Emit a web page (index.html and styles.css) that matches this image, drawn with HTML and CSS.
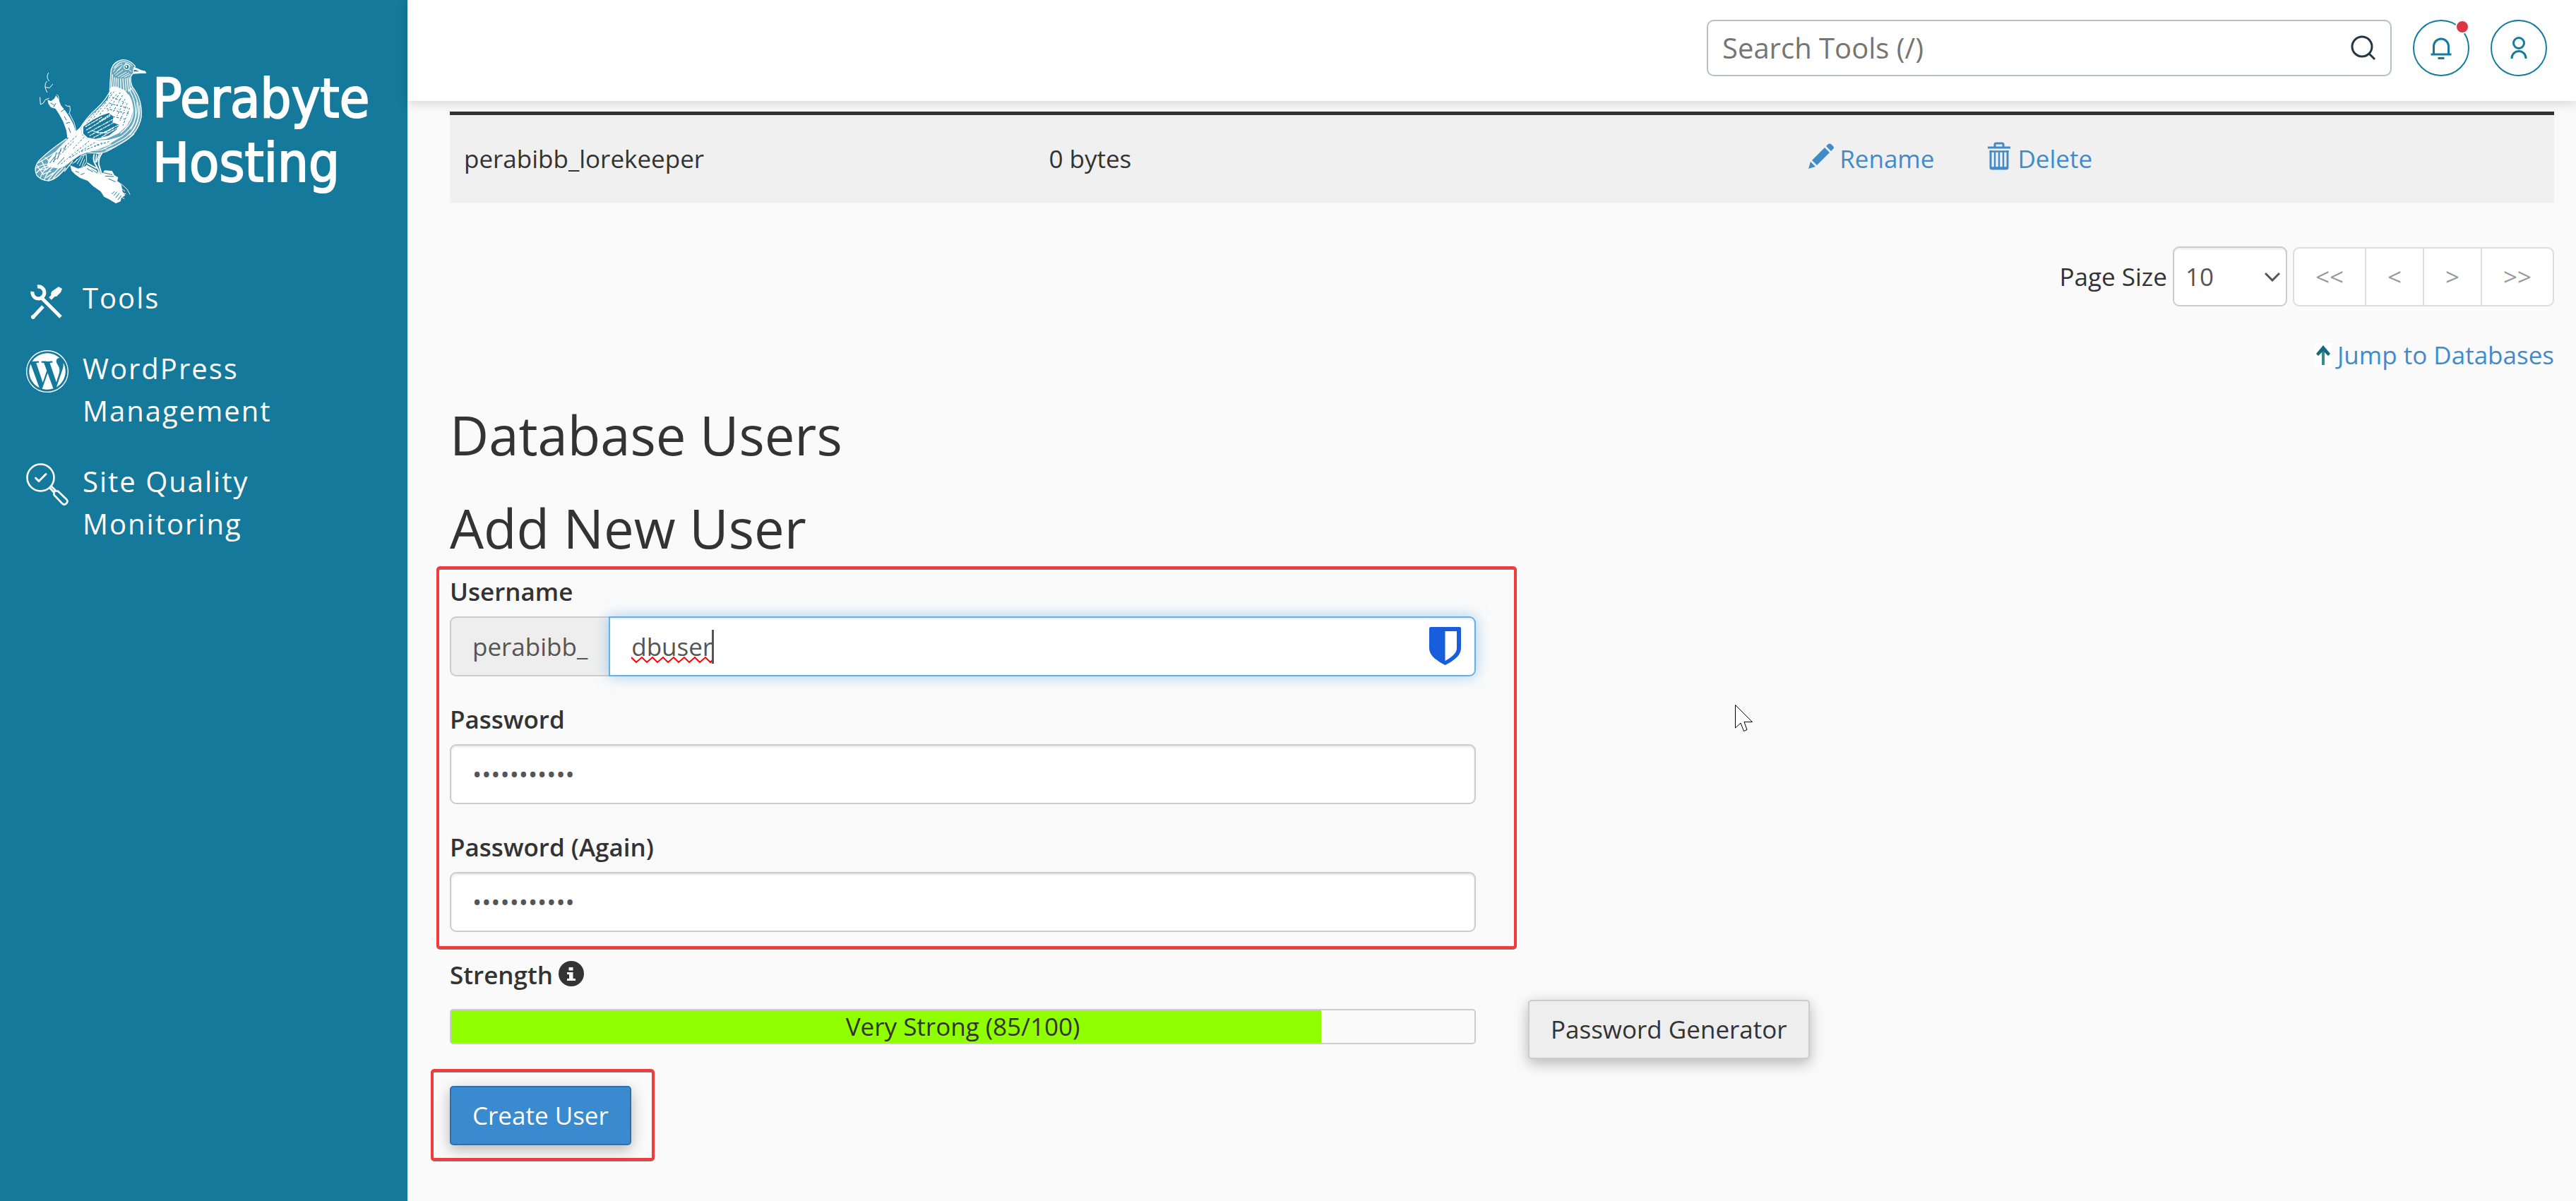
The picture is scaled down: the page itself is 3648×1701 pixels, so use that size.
FILE: index.html
```html
<!DOCTYPE html>
<html lang="en">
<head>
<meta charset="utf-8">
<title>Database Users</title>
<meta name="viewport" content="width=device-width, initial-scale=1">
<link rel="stylesheet" href="styles.css">
</head>
<body>
<div class="app">
  <aside class="sidebar">
    <a class="brand" href="#">
      <svg class="brand-bird" viewBox="0 0 510 648" fill="none" stroke="#fff" stroke-linecap="round" aria-hidden="true">
        <!-- branch -->
        <path fill="#fff" stroke="none" d="M70 190L84 196 98 186 106 172 118 190 126 212 146 238 164 264 180 294 190 326 184 350 154 352 150 320 136 282 118 250 104 228 84 222 74 208Z"/>
        <path stroke-width="3" d="M38 180L40 210 52 204 60 190 76 184M74 76Q62 92 76 110M66 112Q52 130 68 158M60 136L78 140 92 124M110 168Q122 178 116 196M146 212Q156 222 164 216 170 240 160 250M164 250L184 290 192 326"/>
        <path fill="#fff" stroke="none" d="M166 468L200 482 236 470 270 488 300 508 312 490 344 492 354 510 370 520 366 536 384 552 388 578 400 596 384 606 380 622 360 630 330 612 310 602 296 580 262 556 240 534 208 522 188 508 172 492Z"/>
        <path stroke-width="3" d="M356 530L386 550 408 570 420 592M388 570l10 8M390 586l12 4M384 604l12 6"/>
        <path stroke="#14799b" stroke-width="3" d="M84 204l12 8M104 206l-8 14M128 240l12-8M142 262l8 14M150 290l14-4M160 310l8 20M238 482l24 14M256 484l26 18M308 500l36 8M316 514l34 2M330 526l28 12M352 596l12-14M360 606l14-18M370 614l12-16M344 590l10-10M190 494l12 4M212 508l14-6"/>
        <!-- body and tail -->
        <path fill="#fff" fill-opacity=".35" stroke="none" d="M424 100Q426 130 446 164 474 220 468 270 456 326 404 362 350 396 300 418L240 420 200 430Q160 460 140 484 110 530 76 532 36 526 20 498 14 474 36 450 80 408 170 345 206 312 240 270 290 220 326 186 338 150 336 110 336 70 348 40 370 18 400 24 436 30 436 56Z"/>
        <path fill="#fff" stroke="none" d="M336 140Q346 130 366 136L400 150 424 186 434 230 424 270 406 302 372 332 320 356 260 364 232 352 216 336 212 310 232 280 262 250 300 216 326 186Z"/>
        <path fill="#fff" stroke="none" d="M210 306L216 340 240 356 280 362 330 360 380 346 330 380 290 400 236 414 206 426 172 450 140 474 118 482 92 478 68 474 74 444 100 414 126 386 158 354 184 330Z"/>
        <path fill="#14799b" stroke="none" d="M222 304L262 276 296 258 330 246 350 262 346 286 374 296 364 316 330 342 274 356 240 350 222 334Z"/>
        <path stroke-width="4" stroke-dasharray="6 5 12 6 3 5" d="M232 304L300 264M236 318L336 258M242 330L346 274M250 342L356 284M266 350L370 298M300 348L372 306M264 322q40 14 66 6M282 330q34 4 70-22M290 282L336 252"/>
        <path stroke="#14799b" stroke-width="3" stroke-dasharray="5 9 8 8 3 11" d="M340 160L236 290M352 156L262 272M362 168L292 252M378 160L322 244M388 172L346 246M398 188L364 262M408 206L376 284M418 226L390 300M346 180L400 202M336 206L414 226M322 228L418 250M350 262L406 274M224 350L180 396M246 366L128 462M270 372L160 440M300 374L210 412M192 344L108 424M330 368L270 388M180 368L90 456"/>
        <path stroke-width="4" d="M432 138Q474 190 468 264 456 326 404 362 360 390 320 410 300 416 280 418M424 140Q462 190 456 262 446 320 396 354 350 382 300 402M416 146Q448 196 444 260 436 308 386 344 344 370 290 392M414 168Q438 210 432 258 424 298 380 332M206 314Q240 260 280 226 318 190 334 156"/>
        <path stroke-width="3" d="M462 214Q466 290 420 340M450 200Q454 270 424 316M438 336Q390 380 318 404M240 412q30 8 60 4M250 404q40 6 70-8M270 396q34 0 70-18"/>
        <!-- tail feathers -->
        <path stroke-width="4" d="M150 356Q80 404 36 446 8 478 24 510 44 534 76 534 112 526 146 480M30 458q30-16 70-44M22 480q30-20 68-16M24 500q24-30 60-28M40 520q8-30 40-44M56 530q10-30 36-54M74 530q20-26 44-50M94 524q10-16 40-44M60 436q20 10 22 34M44 448l20 40M26 470l26 38M36 488l34-4M50 506l34-12M66 520l30-20M176 452l-34 42"/>
        <path stroke="#14799b" stroke-width="3" d="M108 414l-12 40M128 396l-16 46M100 432l-20 26M148 384l-8 20M140 436l-26 28"/>
        <path stroke-width="3" d="M186 456l28-28 20-6 2 30-16 26M196 462l18-30M206 470l18-42M216 474l12-30M176 462q14-10 20-20"/>
        <!-- legs -->
        <path stroke-width="6" d="M268 424Q262 446 272 462L284 484 302 530 322 552M300 418Q284 440 288 466L298 500 324 546M240 460L276 480M236 470l40 22"/>
        <path stroke-width="5" d="M278 424l-4 30M290 420l-12 34"/>
        <!-- neck and head -->
        <path stroke-width="4" d="M340 62Q336 110 334 150M340 64Q350 26 390 20 424 22 442 48L436 58 434 76 424 90Q420 116 432 140M346 84L340 156M354 96L350 150M362 98L360 146M370 100L370 144M380 100L382 146M390 100L394 150M400 100L404 150M408 98L414 154M416 94L422 150"/>
        <path stroke-width="3" d="M352 56Q362 32 392 28 416 28 430 46M350 70Q362 44 386 38M354 80L382 54M360 86L390 64M370 92L404 72M382 94L416 76M396 94L422 82M400 34q14 2 22 14M378 30l-22 24M390 44l-24 22M416 62l10 8"/>
        <circle cx="406" cy="50" r="11" fill="#14799b" stroke-width="4"/>
        <path fill="#fff" stroke="none" d="M400 44h8v10h-6zM436 50L452 56 468 64 486 68 490 78 466 78 430 80 438 70 460 70 446 64 434 62Z"/>
      </svg>
      <span class="brand-name">Perabyte<br>Hosting</span>
    </a>
    <nav class="menu">
      <a class="menu-item" href="#">
        <svg class="menu-icon" viewBox="0 0 60 60" aria-hidden="true">
          <g fill="none" stroke="#fff" stroke-linecap="butt">
            <path stroke-width="5" d="M20 24L49 53M10 53L24 38" />
            <path stroke-width="5" d="M16 10A8.500 8.500 0 1 1 9 17"/>
            <path stroke-width="5" d="M34 27L39 22"/>
          </g>
          <path fill="#fff" d="M36 17L46 10 51 13 49 18 43 24 38 24 35 21ZM7 54a3 3 0 1 1 5 1 3 3 0 0 1-5-1Z"/>
        </svg>
        <span>Tools</span>
      </a>
      <a class="menu-item" href="#">
        <svg class="menu-icon" viewBox="0 0 122.520 122.523" fill="#fff" aria-hidden="true">
          <path d="M8.708 61.260c0 20.802 12.089 38.779 29.619 47.298L13.258 39.872C10.342 46.408 8.708 53.641 8.708 61.260zM96.740 58.608c0-6.495-2.333-10.993-4.334-14.494-2.664-4.329-5.161-7.995-5.161-12.324 0-4.831 3.664-9.328 8.825-9.328.233 0 .454.029.681.042-9.350-8.566-21.807-13.796-35.489-13.796-18.360 0-34.513 9.420-43.910 23.688 1.233.037 2.395.063 3.382.063 5.497 0 14.006-.667 14.006-.667 2.833-.167 3.167 3.994.337 4.329 0 0-2.847.335-6.015.501L48.200 93.547l11.501-34.493-8.188-22.434c-2.830-.166-5.511-.501-5.511-.501-2.832-.166-2.500-4.496.332-4.329 0 0 8.679.667 13.843.667 5.496 0 14.006-.667 14.006-.667 2.835-.167 3.168 3.994.337 4.329 0 0-2.853.335-6.015.501l18.992 56.494 5.242-17.517C95.011 68.328 96.740 63.107 96.740 58.608zM62.184 65.857L46.416 111.676c4.708 1.384 9.687 2.141 14.846 2.141 6.120 0 11.989-1.058 17.452-2.979-.141-.225-.269-.464-.374-.724L62.184 65.857zM107.376 36.046c.226 1.674.354 3.471.354 5.404 0 5.333-.996 11.328-3.996 18.824l-16.053 46.413c15.624-9.111 26.133-26.038 26.133-45.426C113.813 52.124 111.480 43.532 107.376 36.046z"/>
          <path d="M61.262 0C27.483 0 0 27.481 0 61.260c0 33.783 27.483 61.263 61.262 61.263 33.778 0 61.265-27.480 61.265-61.263C122.526 27.481 95.040 0 61.262 0zM61.262 119.715c-32.230 0-58.453-26.223-58.453-58.455 0-32.230 26.222-58.451 58.453-58.451 32.229 0 58.450 26.221 58.450 58.451C119.712 93.492 93.491 119.715 61.262 119.715z"/>
        </svg>
        <span>WordPress Management</span>
      </a>
      <a class="menu-item" href="#">
        <svg class="menu-icon" viewBox="0 0 60 60" fill="none" stroke="#fff" stroke-width="2.600" stroke-linecap="round" stroke-linejoin="round" aria-hidden="true">
          <circle cx="20.500" cy="20.500" r="19"/>
          <path stroke-width="3" d="M13.500 21L18 25.500 28 15.500"/>
          <path d="M33.500 35L39 41M36 33L42 39M39.500 45V41Q40 39 42 39.500L45 39.500 57 51Q60 54 57 57 54 60 51 57Z"/>
        </svg>
        <span>Site Quality Monitoring</span>
      </a>
    </nav>
  </aside>

  <div class="page">
    <header class="topbar">
      <form class="search" role="search">
        <input class="search-input" type="search" placeholder="Search Tools (/)" aria-label="Search Tools">
        <button class="search-button" type="button" aria-label="Search">
          <svg viewBox="0 0 36 36" width="36" height="36" fill="none" stroke="#253746" stroke-width="3" aria-hidden="true"><circle cx="16" cy="16" r="14"/><path d="M26 26L34 34"/></svg>
        </button>
      </form>
      <button class="round-button" type="button" aria-label="Notifications">
        <svg viewBox="0 0 32 32" width="32" height="32" fill="none" stroke="#127c9e" stroke-width="3" aria-hidden="true"><path d="M1.500 25H30.500M5.500 25V13.500a10.500 10.500 0 0 1 21 0V25M11.500 30.500h9"/></svg>
        <span class="badge"></span>
      </button>
      <button class="round-button" type="button" aria-label="Account">
        <svg viewBox="0 0 32 32" width="32" height="32" fill="none" stroke="#127c9e" stroke-width="3" aria-hidden="true"><circle cx="16" cy="9" r="7.500"/><path d="M6 31V30.500a10 10 0 0 1 20 0V31"/></svg>
      </button>
    </header>

    <main class="content">
      <table class="databases">
        <colgroup><col class="col-name"><col class="col-size"><col></colgroup>
        <tbody>
          <tr>
            <td>perabibb_lorekeeper</td>
            <td>0 bytes</td>
            <td>
              <div class="actions">
                <a href="#"><svg class="action-icon" viewBox="0 0 36 36" fill="currentColor" aria-hidden="true"><path d="M0 36L3 26 10 33ZM5 24L23 6 30 13 12 31ZM25 4L28 1Q30 0 32 1L35 4Q37 6 35 8L32 11Z"/></svg>Rename</a>
                <a href="#"><svg class="action-icon" viewBox="0 0 36 40" fill="none" stroke="currentColor" aria-hidden="true"><path stroke-width="3" d="M2 8H34M12 7V3.500Q12 2 14 2H22Q24 2 24 3.500V7M6 12V36Q6 38 8 38H28Q30 38 30 36V12"/><path stroke-width="2.500" d="M4.500 13.500H31.500M12 13V37M18 13V37M24 13V37M7 36.500H29"/></svg>Delete</a>
              </div>
            </td>
          </tr>
        </tbody>
      </table>

      <div class="paging">
        <label for="page-size">Page Size</label>
        <div class="select-wrap">
          <select id="page-size" class="page-size"><option>10</option><option>20</option><option>50</option></select>
          <svg class="select-arrow" viewBox="0 0 22 14" fill="none" stroke="#555" stroke-width="3" aria-hidden="true"><path d="M1 2L11 12 21 2"/></svg>
        </div>
        <div class="pager">
          <button type="button">&lt;&lt;</button><button type="button">&lt;</button><button type="button">&gt;</button><button type="button">&gt;&gt;</button>
        </div>
      </div>

      <p class="jump">
        <a href="#"><svg viewBox="0 0 24 34" width="24" height="34" aria-hidden="true"><path fill="#fff" d="M0 0h24v34H0z"/><path fill="none" stroke="#3f8693" stroke-width="4" d="M12 8V31"/><path fill="#14697c" d="M12 3L22 15 19 18 12 11 5 18 2 15Z"/></svg>Jump to Databases</a>
      </p>

      <h2>Database Users</h2>
      <h2>Add New User</h2>

      <form class="user-form">
        <div class="credentials">
          <div class="field">
            <label for="username">Username</label>
            <div class="input-group">
              <span class="addon">perabibb_</span>
              <div class="input-focus">
                <input id="username" class="text-input is-focused" type="text" value="dbuser" spellcheck="false">
                <svg class="typing-marks" viewBox="0 0 118 48" width="118" height="48" fill="none" aria-hidden="true"><path stroke="#f00" stroke-width="2" d="M0 39L7 46 15 39 22 46 30 39 37 46 45 39 52 46 60 39 67 46 75 39 82 46 90 39 97 46 105 39 112 46 115 43"/><path stroke="#555" stroke-width="3" d="M115.500 0V48"/></svg>
                <svg class="shield" viewBox="0 0 45 54" width="45" height="54" aria-hidden="true"><path fill="#175ddc" fill-rule="evenodd" d="M2 0H43Q45 0 45 2V30Q45 36 40 42 33 49 22.500 54 12 49 5 42 0 36 0 30V2Q0 0 2 0ZM22.500 6V48Q39 39 39 30V6Z"/></svg>
              </div>
            </div>
          </div>
          <div class="field">
            <label for="password">Password</label>
            <input id="password" class="text-input" type="password" value="lorekeeper1">
          </div>
          <div class="field">
            <label for="password-again">Password (Again)</label>
            <input id="password-again" class="text-input" type="password" value="lorekeeper1">
          </div>
        </div>

        <div class="strength">
          <span class="strength-label">Strength
            <svg viewBox="0 0 36 36" width="36" height="36" aria-hidden="true"><circle cx="18" cy="18" r="18" fill="#333"/><path fill="#fafafa" d="M14.500 9h6v4.500h-6zM12 16h8.500v9H24v3H12v-3h3v-6h-3z"/></svg>
          </span>
          <div class="strength-row">
            <div class="meter">
              <div class="meter-fill" style="width: 85%"></div>
              <span class="meter-text">Very Strong (85/100)</span>
            </div>
            <div><button class="button" type="button">Password Generator</button></div>
          </div>
        </div>

        <div class="submit"><button class="button button-primary" type="submit">Create User</button></div>
      </form>

      <svg class="pointer" viewBox="0 0 26 38" width="26" height="38" fill="#fff" stroke="#000" stroke-width="1" aria-hidden="true"><path d="M.5.5V33L8 26 12.500 37.500 17 35.500 13 24.500H24.500Z"/></svg>
    </main>
  </div>
</div>
</body>
</html>
```

FILE: styles.css
```css
* { box-sizing: border-box; }

body {
  margin: 0;
  background: #fafafa;
  color: #333;
  font: 35px/50px "Open Sans", "Noto Sans", sans-serif;
}

a { color: #428bca; text-decoration: none; }
button, input, select { font: inherit; color: inherit; }

.app { display: flex; min-height: 100vh; }

/* Sidebar */
.sidebar {
  flex: 0 0 577px;
  padding: 78px 24px 40px 37px;
  background: #14799b;
}
.brand { display: flex; gap: 2px; padding-left: 7px; color: #fff; }
.brand-bird { flex: none; width: 170px; height: 216px; }
.brand-name {
  padding-top: 16px;
  font: 77px/91px "DejaVu Sans Condensed", "DejaVu Sans", sans-serif;
  -webkit-text-stroke: 2px #fff;
}
.menu { display: grid; gap: 40px; margin-top: 98px; }
.menu-item {
  display: flex;
  align-items: flex-start;
  gap: 20px;
  color: #fff;
  font-size: 40px;
  line-height: 60px;
  letter-spacing: 2px;
}
.menu-icon { flex: none; width: 60px; height: 60px; margin: 4px 0 -4px; }

/* Header */
.page { flex: 1; min-width: 0; }
.topbar {
  display: flex;
  justify-content: flex-end;
  gap: 30px;
  padding: 28px 41px 35px;
  background: #fff;
  box-shadow: 0 4px 14px rgba(0, 0, 0, .14);
}
.search {
  display: flex;
  align-items: center;
  flex: 0 1 970px;
  height: 80px;
  padding: 0 20px;
  border: 2px solid #b9bccd;
  border-radius: 10px;
}
.search-input {
  flex: 1;
  min-width: 0;
  padding: 0;
  border: 0;
  outline: 0;
  background: none;
  font-size: 40px;
}
.search-input::placeholder { color: #757575; opacity: 1; }
.search-button { display: flex; padding: 0; border: 0; background: none; }
.round-button {
  position: relative;
  display: flex;
  align-items: center;
  justify-content: center;
  width: 80px;
  height: 80px;
  padding: 0;
  border: 2px solid #127c9e;
  border-radius: 50%;
  background: #fff;
}
.badge {
  position: absolute;
  top: -2px;
  right: -2px;
  width: 20px;
  height: 20px;
  border: 2px solid #fff;
  border-radius: 50%;
  background: #dc3545;
}

/* Database list */
.content { position: relative; padding: 15px 31px 79px 60px; }
.databases {
  width: 100%;
  border-collapse: collapse;
  table-layout: fixed;
  border-top: 5px solid #333;
  background: #f0f0f0;
}
.databases td { padding: 37px 19px 37px 20px; }
.col-name { width: 27.800%; }
.col-size { width: 36.100%; }
.actions { display: flex; gap: 74px; }
.actions a { display: flex; gap: 8px; }
.action-icon { width: 36px; height: 40px; margin-top: 1px; }

.paging {
  display: flex;
  align-items: center;
  justify-content: flex-end;
  gap: 8px;
  margin-top: 62px;
}
.select-wrap { position: relative; }
.page-size {
  display: block;
  width: 162px;
  height: 85px;
  padding: 0 16px;
  border: 2px solid #ccc;
  border-radius: 9px;
  appearance: none;
  background: #fff;
  box-shadow: inset 0 2px 2px rgba(0, 0, 0, .08);
  color: #555;
}
.select-arrow {
  position: absolute;
  top: 36px;
  right: 10px;
  width: 22px;
  height: 14px;
  pointer-events: none;
}
.pager { display: flex; }
.pager button {
  height: 84px;
  margin-left: -2px;
  padding: 0 30px;
  border: 2px solid #ddd;
  background: #fff;
  color: #999;
}
.pager button:first-child { margin-left: 0; border-radius: 9px 0 0 9px; }
.pager button:last-child { border-radius: 0 9px 9px 0; }

.jump { display: flex; justify-content: flex-end; margin: 44px 0 0; }
.jump a { display: flex; align-items: center; gap: 8px; }

h2 {
  margin: 48px 0 0;
  font-size: 76px;
  font-weight: 400;
  line-height: 84px;
}
.jump + h2 { margin-top: 46px; }

/* New user form */
.user-form { margin-top: 23px; }
.credentials,
.submit { position: relative; }
.credentials {
  display: grid;
  gap: 36px;
  width: calc(50% - 37px);
}
.credentials::after,
.submit::after {
  content: "";
  position: absolute;
  border: 4px solid #f43b3b;
  border-radius: 5px;
  filter: drop-shadow(0 1px 0 #808080);
  pointer-events: none;
}
.credentials::after { inset: -11px -58px -24px -19px; }
.field { display: grid; gap: 10px; }
.field label,
.strength-label { font-weight: 600; }
.text-input {
  display: block;
  width: 100%;
  height: 85px;
  padding: 0 30px;
  border: 2px solid #ccc;
  border-radius: 9px;
  outline: 0;
  background: #fff;
  box-shadow: inset 0 2px 3px rgba(0, 0, 0, .1);
  color: #555;
}
.input-group { display: flex; }
.addon {
  display: flex;
  align-items: center;
  padding: 0 30px;
  border: 2px solid #ccc;
  border-right: 0;
  border-radius: 9px 0 0 9px;
  background: #eee;
  color: #555;
}
.input-focus { position: relative; flex: 1; }
.is-focused {
  border-color: #66afe9;
  border-radius: 0 9px 9px 0;
  box-shadow: inset 0 2px 3px rgba(0, 0, 0, .08), 0 0 20px rgba(102, 175, 233, .6);
}
.typing-marks { position: absolute; top: 19px; left: 32px; }
.shield { position: absolute; top: 15px; right: 21px; }

.strength { display: grid; gap: 10px; margin-top: 36px; }
.strength-label { display: flex; gap: 8px; }
.strength-label svg { margin-top: 5px; }
.strength-row {
  display: grid;
  grid-template-columns: 1fr 1fr;
  gap: 74px;
  align-items: start;
}
.meter {
  position: relative;
  height: 50px;
  margin-top: 13px;
  border: 2px solid #ccc;
  border-radius: 5px;
}
.meter-fill { height: 100%; background: #90ff00; }
.meter-text {
  position: absolute;
  inset: 0;
  line-height: 46px;
  text-align: center;
}
.button {
  display: block;
  height: 84px;
  padding: 0 30px;
  border: 2px solid #ccc;
  border-radius: 5px;
  background: #eee;
  box-shadow: 0 6px 20px rgba(0, 0, 0, .28);
}
.button-primary { border-color: #2a71b3; background: #398ace; color: #fff; }
.submit { width: max-content; margin-top: 38px; }
.submit::after { inset: -24px -33px -22px -27px; }

.pointer { position: absolute; top: 855px; left: 1880px; overflow: visible; }
```
